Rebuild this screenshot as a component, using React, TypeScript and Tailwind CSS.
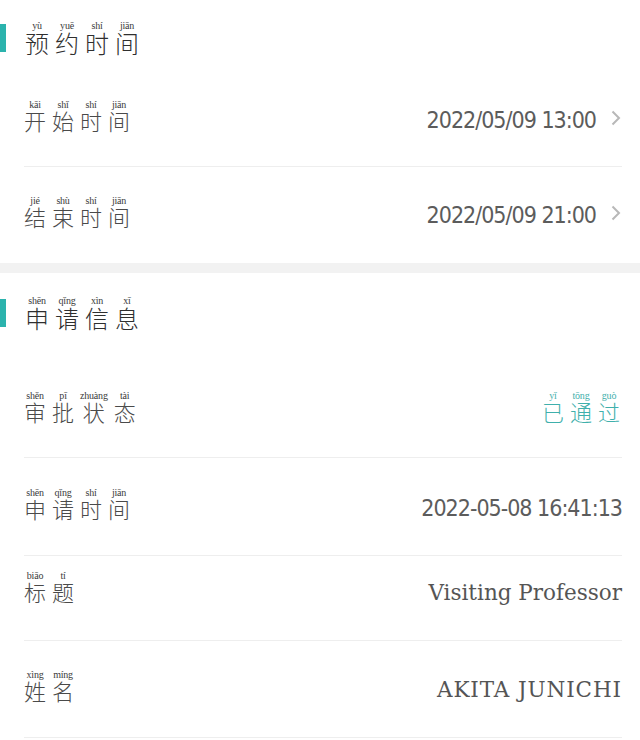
import React from 'react';

type Py = [string, string];

const cjk = '"Noto Sans CJK SC", "Noto Sans", sans-serif';

function Pinyin({ chars, size, color }: { chars: Py[]; size: 'lg' | 'md'; color?: string }) {
  return (
    <div className="flex gap-[6px]">
      {chars.map(([py, ch], i) => (
        <div key={i} className="flex flex-col items-center">
          <span
            className="text-[10px] leading-[10px] tracking-[-0.2px]"
            style={{ fontFamily: '"Liberation Serif", serif', color: color ?? '#3a3a3a' }}
          >
            {py}
          </span>
          <span
            className={
              size === 'lg'
                ? 'text-[24px] leading-[24px] font-light'
                : 'text-[22px] leading-[22px] font-light mt-[-1px]'
            }
            style={{ fontFamily: cjk, color: color ?? (size === 'lg' ? '#2f2f2f' : '#4a4a4a') }}
          >
            {ch}
          </span>
        </div>
      ))}
    </div>
  );
}

function Header({ chars, className }: { chars: Py[]; className: string }) {
  return (
    <div className={`flex items-start ${className}`}>
      <div className="flex items-center gap-[19px]">
        <div className="w-[6px] h-[28px] bg-[#2bb3ad]" />
        <Pinyin chars={chars} size="lg" />
      </div>
    </div>
  );
}

function Chevron() {
  return (
    <svg width="12" height="16" viewBox="0 0 12 16" className="ml-[14px] mt-[-5px]">
      <path d="M2.5 1.5 L9 8 L2.5 14.5" fill="none" stroke="#b8b8b8" strokeWidth="2" />
    </svg>
  );
}

// label sits at a fixed distance from the row top; value box is placed by valueCls
function Row({
  label,
  children,
  h,
  labelTop,
  valueCls,
  arrow,
  last,
}: {
  label: Py[];
  children: React.ReactNode;
  h: string;
  labelTop: string;
  valueCls: string;
  arrow?: boolean;
  last?: boolean;
}) {
  return (
    <div className={`pl-[24px] pr-[18px] ${h}`}>
      <div className={`flex h-full items-start justify-between ${last ? '' : 'border-b border-[#eeeeee]'}`}>
        <div className={labelTop}>
          <Pinyin chars={label} size="md" />
        </div>
        <div className={`flex items-center ${valueCls}`}>
          {children}
          {arrow && <Chevron />}
        </div>
      </div>
    </div>
  );
}

const dateFont = { fontFamily: '"DejaVu Sans Condensed", "Liberation Sans Narrow", "Liberation Sans", sans-serif' };
const slabFont = { fontFamily: '"DejaVu Serif", serif' };
const dateCls = 'text-[23px] text-[#5c5c5c] font-extralight tracking-[-1px]';

export default function App() {
  return (
    <div className="w-[640px] h-[740px] bg-white overflow-hidden">
      <Header
        className="h-[71px] pt-[21px]"
        chars={[
          ['yù', '预'],
          ['yuē', '约'],
          ['shí', '时'],
          ['jiān', '间'],
        ]}
      />
      <Row
        h="h-[96px]"
        labelTop="mt-[29px]"
        valueCls="h-[30px] mt-[34px]"
        arrow
        label={[
          ['kāi', '开'],
          ['shǐ', '始'],
          ['shí', '时'],
          ['jiān', '间'],
        ]}
      >
        <span className={dateCls} style={dateFont}>
          2022/05/09 13:00
        </span>
      </Row>
      <Row
        h="h-[96px]"
        labelTop="mt-[29px]"
        valueCls="h-[30px] mt-[33px]"
        arrow
        last
        label={[
          ['jié', '结'],
          ['shù', '束'],
          ['shí', '时'],
          ['jiān', '间'],
        ]}
      >
        <span className={dateCls} style={dateFont}>
          2022/05/09 21:00
        </span>
      </Row>
      <div className="h-[10px] bg-[#f2f2f2]" />
      <Header
        className="h-[89px] pt-[23px]"
        chars={[
          ['shēn', '申'],
          ['qǐng', '请'],
          ['xìn', '信'],
          ['xī', '息'],
        ]}
      />
      <Row
        h="h-[96px]"
        labelTop="mt-[29px]"
        valueCls="mt-[29px] mr-[2px]"
        label={[
          ['shěn', '审'],
          ['pī', '批'],
          ['zhuàng', '状'],
          ['tài', '态'],
        ]}
      >
        <Pinyin
          chars={[
            ['yǐ', '已'],
            ['tōng', '通'],
            ['guò', '过'],
          ]}
          size="md"
          color="#3fb0ac"
        />
      </Row>
      <Row
        h="h-[98px]"
        labelTop="mt-[30px]"
        valueCls="h-[30px] mt-[35px]"
        label={[
          ['shēn', '申'],
          ['qǐng', '请'],
          ['shí', '时'],
          ['jiān', '间'],
        ]}
      >
        <span className={dateCls} style={dateFont}>
          2022-05-08 16:41:13
        </span>
      </Row>
      <Row
        h="h-[85px]"
        labelTop="mt-[15px]"
        valueCls="h-[30px] mt-[22px]"
        label={[
          ['biāo', '标'],
          ['tí', '题'],
        ]}
      >
        <span className="text-[21.5px] text-[#555555] font-light" style={slabFont}>
          Visiting Professor
        </span>
      </Row>
      <Row
        h="h-[97px]"
        labelTop="mt-[29px]"
        valueCls="h-[30px] mt-[34px]"
        label={[
          ['xìng', '姓'],
          ['míng', '名'],
        ]}
      >
        <span className="text-[21.5px] text-[#555555] font-light tracking-[0.9px]" style={slabFont}>
          AKITA JUNICHI
        </span>
      </Row>
    </div>
  );
}
